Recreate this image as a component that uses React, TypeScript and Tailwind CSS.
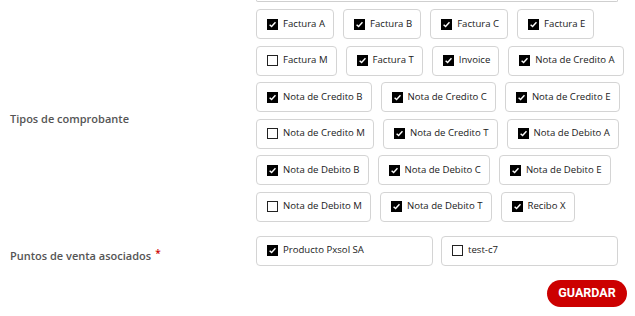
import React, { useState } from "react";

type Opt = { label: string; checked: boolean };

const filas: Opt[][] = [
  [
    { label: "Factura A", checked: true },
    { label: "Factura B", checked: true },
    { label: "Factura C", checked: true },
    { label: "Factura E", checked: true },
  ],
  [
    { label: "Factura M", checked: false },
    { label: "Factura T", checked: true },
    { label: "Invoice", checked: true },
    { label: "Nota de Credito A", checked: true },
  ],
  [
    { label: "Nota de Credito B", checked: true },
    { label: "Nota de Credito C", checked: true },
    { label: "Nota de Credito E", checked: true },
  ],
  [
    { label: "Nota de Credito M", checked: false },
    { label: "Nota de Credito T", checked: true },
    { label: "Nota de Debito A", checked: true },
  ],
  [
    { label: "Nota de Debito B", checked: true },
    { label: "Nota de Debito C", checked: true },
    { label: "Nota de Debito E", checked: true },
  ],
  [
    { label: "Nota de Debito M", checked: false },
    { label: "Nota de Debito T", checked: true },
    { label: "Recibo X", checked: true },
  ],
];

function Check({ checked, onClick }: { checked: boolean; onClick: () => void }) {
  return (
    <span
      onClick={onClick}
      className={`flex h-[11px] w-[11px] shrink-0 items-center justify-center ${
        checked ? "bg-black" : "border border-[#222] bg-white"
      }`}
    >
      {checked && (
        <svg width="9" height="9" viewBox="0 0 10 10">
          <path d="M1.8 5.2 L4 7.3 L8.3 2.6" fill="none" stroke="#fff" strokeWidth="1.6" />
        </svg>
      )}
    </span>
  );
}

function Chip({ opt }: { opt: Opt }) {
  const [on, setOn] = useState(opt.checked);
  return (
    <label className="flex h-[30px] shrink-0 cursor-pointer items-center gap-[5px] whitespace-nowrap rounded-[4px] border border-[#d4d4d4] bg-white pl-[10px] pr-[8px] text-[9.6px] text-[#1a1a1a]">
      <Check checked={on} onClick={() => setOn(!on)} />
      <span>{opt.label}</span>
    </label>
  );
}

function PuntoVenta({ label, checked }: { label: string; checked: boolean }) {
  const [on, setOn] = useState(checked);
  return (
    <div className="flex h-[30px] items-center gap-[5px] whitespace-nowrap rounded-[4px] border border-[#d4d4d4] bg-white px-[10px] text-[9.6px] text-[#1a1a1a]">
      <Check checked={on} onClick={() => setOn(!on)} />
      <span>{label}</span>
    </div>
  );
}

export default function App() {
  return (
    <div className="h-[316px] w-[635px] bg-white font-['Open_Sans',sans-serif]">
      <div className="grid grid-cols-[256px_362px]">
        <div />
        <div className="h-[2px] rounded-b-[3px] border-x border-b border-[#cfcfcf]" />

        <div className="flex items-center pl-[10px] pt-[14px] text-[11px] font-semibold text-[#555]">
          Tipos de comprobante
        </div>
        <div className="flex flex-col gap-[6.5px] pt-[7px]">
          {filas.map((fila, i) => (
            <div key={i} className="flex gap-[9px]">
              {fila.map((o) => (
                <Chip key={o.label} opt={o} />
              ))}
            </div>
          ))}
        </div>

        <div className="flex items-start pl-[10px] pt-[26px] text-[11px] font-semibold text-[#555]">
          Puntos de venta asociados
          <span className="ml-[4px] mt-[-2px] text-[10px] text-[#cc0000]">*</span>
        </div>
        <div className="grid grid-cols-2 items-start gap-[8px] pt-[14px]">
          <PuntoVenta label="Producto Pxsol SA" checked={true} />
          <PuntoVenta label="test-c7" checked={false} />
        </div>
      </div>

      <div className="flex justify-end pr-[8px] pt-[14px]">
        <button className="h-[27px] w-[80px] rounded-full bg-[#cc0000] font-['Roboto',sans-serif] text-[12.5px] font-bold text-white">
          GUARDAR
        </button>
      </div>
    </div>
  );
}
